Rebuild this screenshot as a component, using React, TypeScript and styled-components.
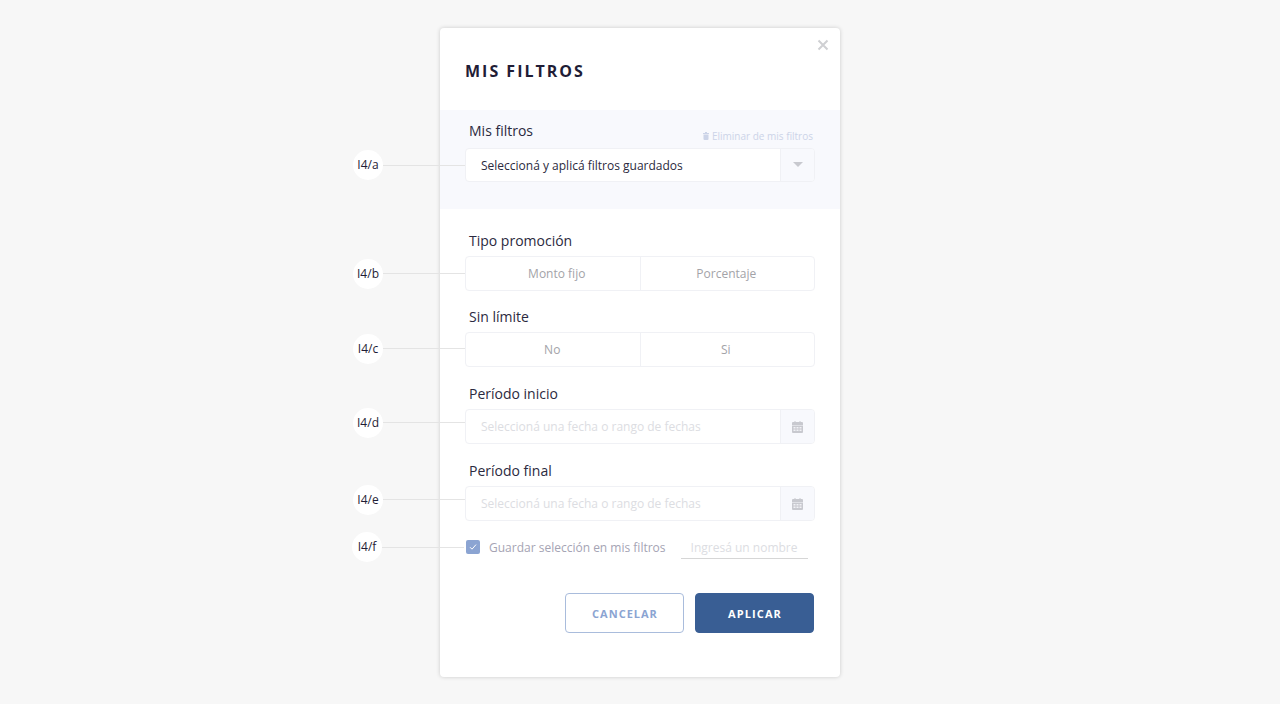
import { ReactNode } from 'react';
import styled, { createGlobalStyle } from 'styled-components';

const GlobalStyle = createGlobalStyle`
  html, body {
    margin: 0;
    padding: 0;
    background: #f7f7f7;
    font-family: "Open Sans", "Liberation Sans", sans-serif;
  }

  * {
    box-sizing: border-box;
  }
`;

const Page = styled.div`
  display: flex;
  justify-content: center;
  width: 1280px;
  height: 704px;
  padding-top: 28px;
  overflow: hidden;
`;

const Modal = styled.div`
  position: relative;
  width: 400px;
  height: 649px;
  background: #fff;
  border-radius: 4px;
  box-shadow: 0 0 4px rgba(0, 0, 0, 0.18);
`;

const CloseButton = styled.button`
  position: absolute;
  top: 11px;
  right: 11px;
  display: flex;
  padding: 0;
  border: 0;
  background: none;
`;

const Title = styled.h1`
  height: 82px;
  margin: 0;
  padding: 32px 0 0 25px;
  font-size: 16px;
  line-height: 22px;
  font-weight: 700;
  letter-spacing: 2px;
  color: #1f1d36;
`;

const SavedSection = styled.section`
  height: 99px;
  padding: 12px 25px 0;
  background: #f8f9fd;
`;

const FormBody = styled.div`
  padding: 23px 25px 0;
`;

const Field = styled.div<{ $gap?: number }>`
  margin-bottom: ${(props) => props.$gap ?? 18}px;
`;

const LabelRow = styled.div<{ $gap?: number }>`
  display: flex;
  justify-content: space-between;
  align-items: flex-end;
  height: 18px;
  margin-bottom: ${(props) => props.$gap ?? 6}px;
  padding-left: 4px;
`;

const Label = styled.label`
  font-size: 14px;
  line-height: 18px;
  color: #2b2a40;
`;

const RemoveLink = styled.a`
  display: flex;
  align-items: center;
  gap: 3px;
  margin-right: 2px;
  margin-bottom: -3px;
  font-size: 10px;
  line-height: 14px;
  color: #ccd4e8;
`;

const Control = styled.div<{ $height?: number }>`
  position: relative;
  display: flex;
  width: 350px;
  height: ${(props) => props.$height ?? 35}px;
  background: #fff;
  border: 1px solid #f0f1f5;
  border-radius: 4px;
`;

const InputText = styled.span<{ $placeholder?: boolean }>`
  flex: 1;
  padding-left: 15px;
  font-size: 12px;
  line-height: 34px;
  color: ${(props) => (props.$placeholder ? '#dcdde2' : '#2b2a40')};
`;

const Addon = styled.span`
  display: flex;
  justify-content: center;
  align-items: center;
  width: 34px;
  background: #f8f9fd;
  border-left: 1px solid #f0f1f5;
  border-radius: 0 3px 3px 0;
`;

const Caret = styled.span`
  width: 0;
  height: 0;
  margin-top: -1px;
  border-style: solid;
  border-width: 5px 5px 0;
  border-color: #c8c9cf transparent transparent;
`;

const Segment = styled.button<{ $indent?: number }>`
  flex: 1;
  padding: 0;
  border: 0;
  background: none;
  font-family: inherit;
  font-size: 12px;
  text-indent: ${(props) => props.$indent ?? 0}px;
  color: #a3a3a8;

  & + & {
    border-left: 1px solid #f0f1f5;
  }
`;

const SaveRow = styled.div`
  position: relative;
  display: flex;
  align-items: center;
  height: 24px;
  margin-top: -4px;
  padding-left: 1px;
`;

const Checkbox = styled.span`
  display: flex;
  justify-content: center;
  align-items: center;
  width: 14px;
  height: 14px;
  background: #8ba4d2;
  border-radius: 2px;
`;

const SaveLabel = styled.span`
  margin-left: 9px;
  font-size: 12px;
  color: #a5a4b4;
`;

const NameInput = styled.span`
  width: 127px;
  height: 24px;
  margin-left: 15px;
  padding-top: 2px;
  font-size: 12px;
  line-height: 22px;
  text-align: center;
  color: #dcdde2;
  border-bottom: 1px solid #d6d6d6;
`;

const Actions = styled.div`
  display: flex;
  justify-content: flex-end;
  gap: 11px;
  margin-top: 34px;
  padding-right: 1px;
`;

const Button = styled.button<{ $primary?: boolean }>`
  width: 119px;
  height: 40px;
  padding: 0;
  border: 1px solid ${(props) => (props.$primary ? '#395e94' : '#a9bcdc')};
  border-radius: 4px;
  background: ${(props) => (props.$primary ? '#395e94' : '#fff')};
  font-family: inherit;
  font-size: 11px;
  font-weight: 700;
  letter-spacing: ${(props) => (props.$primary ? 1.1 : 1)}px;
  text-indent: 1px;
  color: ${(props) => (props.$primary ? '#fff' : '#8ba4d2')};
`;

const Callout = styled.div<{ $shift?: number }>`
  position: absolute;
  top: calc(50% + ${(props) => props.$shift ?? 0}px);
  left: -113px;
  display: flex;
  align-items: center;
  width: 113px;
  height: 30px;
  margin-top: -15px;
`;

const CalloutBadge = styled.span`
  flex: none;
  width: 30px;
  height: 30px;
  background: #fff;
  border-radius: 50%;
  font-size: 12px;
  line-height: 29px;
  text-align: center;
  color: #1f1d36;
`;

const CalloutLine = styled.span`
  flex: 1;
  height: 1px;
  margin-right: 1px;
  background: #e4e4e4;
`;

const Note = ({ code, shift }: { code: string; shift?: number }) => (
  <Callout $shift={shift}>
    <CalloutBadge>{code}</CalloutBadge>
    <CalloutLine />
  </Callout>
);

const CalendarIcon = () => (
  <svg width="11" height="12" viewBox="0 0 11 12">
    <path d="M2.5 0h1v2h-1zM7.5 0h1v2h-1z" fill="#c8c9cf" />
    <path d="M1 1h9a1 1 0 0 1 1 1v2H0V2a1 1 0 0 1 1-1z" fill="#c8c9cf" />
    <path d="M0 4.6h11V11a1 1 0 0 1-1 1H1a1 1 0 0 1-1-1z" fill="#c8c9cf" />
    <path
      d="M1.5 6h2v1.5h-2zM4.5 6h2v1.5h-2zM7.5 6h2v1.5h-2zM1.5 8.5h2V10h-2zM4.5 8.5h2V10h-2zM7.5 8.5h2V10h-2z"
      fill="#f1f2f6"
    />
  </svg>
);

const TrashIcon = () => (
  <svg width="6" height="8" viewBox="0 0 6 8">
    <path d="M2 0h2v1h2v1H0V1h2z" fill="#ccd4e8" />
    <path d="M.5 2.6h5V7a1 1 0 0 1-1 1h-3a1 1 0 0 1-1-1z" fill="#ccd4e8" />
  </svg>
);

const DateField = ({ label, code }: { label: string; code: string }) => (
  <Field>
    <LabelRow>
      <Label>{label}</Label>
    </LabelRow>
    <Control>
      <Note code={code} shift={-4} />
      <InputText $placeholder>Seleccioná una fecha o rango de fechas</InputText>
      <Addon>
        <CalendarIcon />
      </Addon>
    </Control>
  </Field>
);

const ToggleField = ({
  label,
  code,
  gap,
  shift,
  children,
}: {
  label: string;
  code: string;
  gap?: number;
  shift?: number;
  children: ReactNode;
}) => (
  <Field $gap={gap}>
    <LabelRow>
      <Label>{label}</Label>
    </LabelRow>
    <Control>
      <Note code={code} shift={shift} />
      {children}
    </Control>
  </Field>
);

const App = () => {
  return (
    <Page>
      <GlobalStyle />
      <Modal>
        <CloseButton aria-label="Cerrar">
          <svg width="12" height="12" viewBox="0 0 12 12">
            <path
              d="M1.5 1.5l9 9M10.5 1.5l-9 9"
              stroke="#cfd0d3"
              strokeWidth="2"
            />
          </svg>
        </CloseButton>
        <Title>MIS FILTROS</Title>
        <SavedSection>
          <LabelRow $gap={8}>
            <Label>Mis filtros</Label>
            <RemoveLink>
              <TrashIcon />
              Eliminar de mis filtros
            </RemoveLink>
          </LabelRow>
          <Control $height={34}>
            <Note code="I4/a" />
            <InputText>Seleccioná y aplicá filtros guardados</InputText>
            <Addon>
              <Caret />
            </Addon>
          </Control>
        </SavedSection>
        <FormBody>
          <ToggleField label="Tipo promoción" code="I4/b" gap={17}>
            <Segment $indent={8}>Monto fijo</Segment>
            <Segment $indent={-2}>Porcentaje</Segment>
          </ToggleField>
          <ToggleField label="Sin límite" code="I4/c" shift={-1}>
            <Segment $indent={-1}>No</Segment>
            <Segment $indent={-3}>Si</Segment>
          </ToggleField>
          <DateField label="Período inicio" code="I4/d" />
          <DateField label="Período final" code="I4/e" />
          <SaveRow>
            <Note code="I4/f" />
            <Checkbox>
              <svg width="8" height="8" viewBox="0 0 8 8">
                <path d="M1 4.2l2 2 4-4.6" fill="none" stroke="#fff" />
              </svg>
            </Checkbox>
            <SaveLabel>Guardar selección en mis filtros</SaveLabel>
            <NameInput>Ingresá un nombre</NameInput>
          </SaveRow>
          <Actions>
            <Button>CANCELAR</Button>
            <Button $primary>APLICAR</Button>
          </Actions>
        </FormBody>
      </Modal>
    </Page>
  );
};

export default App;
